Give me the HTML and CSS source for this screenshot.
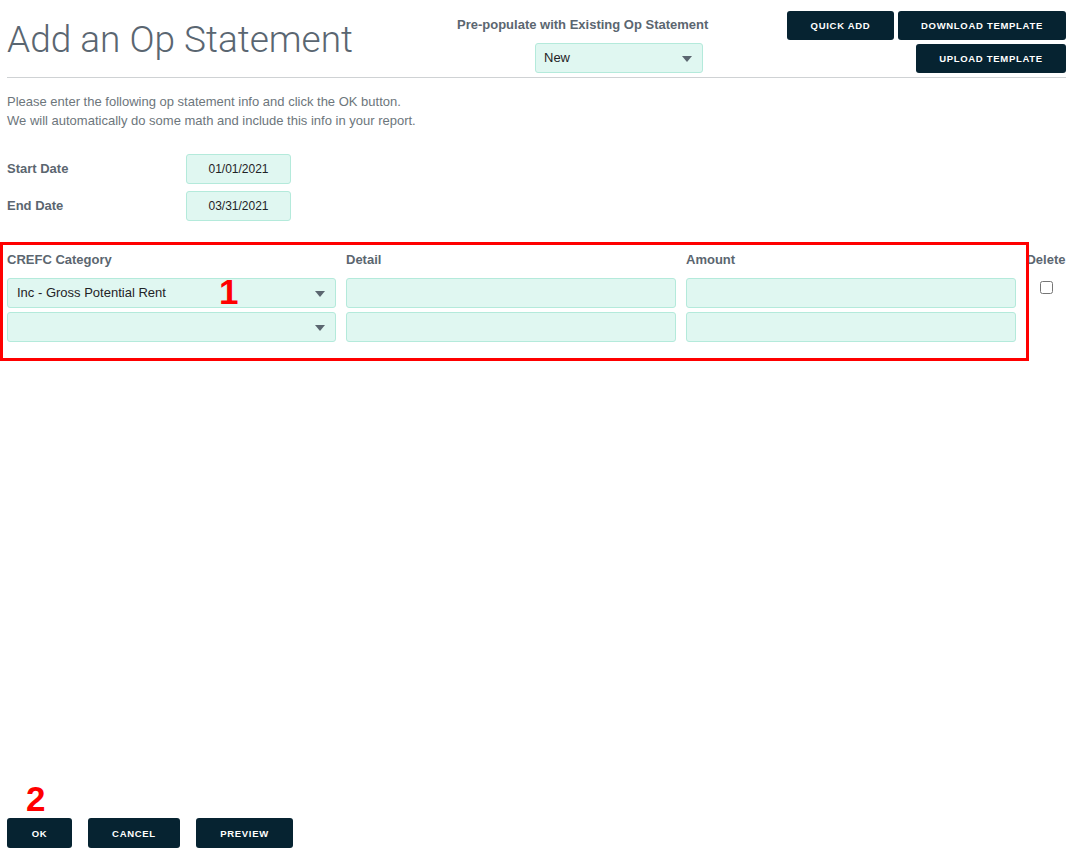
FILE: index.html
```html
<html>

<head>
  <meta charset="utf-8" />
  <title>Add an Op Statement</title>
  <link rel="stylesheet" href="styles.css">
</head>

<body>
  <div class="page">
    <div class="header">
      <h1 class="title">Add an Op Statement</h1>

      <div class="prepop">
        <div class="prepop-label">Pre-populate with Existing Op Statement</div>
        <div class="select prepop-select">New</div>
      </div>

      <div class="header-buttons">
        <div class="btn-row">
          <button class="btn btn-quick">QUICK ADD</button>
          <button class="btn btn-download">DOWNLOAD TEMPLATE</button>
        </div>
        <div class="btn-row">
          <button class="btn btn-upload">UPLOAD TEMPLATE</button>
        </div>
      </div>
    </div>

    <p class="intro">
      Please enter the following op statement info and click the OK button.<br>
      We will automatically do some math and include this info in your report.
    </p>

    <div class="dates">
      <div class="date-row">
        <div class="date-label">Start Date</div>
        <div class="field date-field">01/01/2021</div>
      </div>
      <div class="date-row">
        <div class="date-label">End Date</div>
        <div class="field date-field">03/31/2021</div>
      </div>
    </div>

    <div class="lines">
      <div class="col-head">CREFC Category</div>
      <div class="col-head">Detail</div>
      <div class="col-head">Amount</div>
      <div class="col-head col-delete">Delete</div>

      <div class="select line-select">Inc - Gross Potential Rent</div>
      <div class="field"></div>
      <div class="field"></div>
      <div class="delete-cell"><input type="checkbox" /></div>

      <div class="select line-select"></div>
      <div class="field"></div>
      <div class="field"></div>
      <div class="delete-cell"></div>

      <div class="mark-box"></div>
      <div class="mark mark-1">1</div>
    </div>

    <div class="footer">
      <div class="mark mark-2">2</div>
      <button class="btn btn-ok">OK</button>
      <button class="btn btn-cancel">CANCEL</button>
      <button class="btn btn-preview">PREVIEW</button>
    </div>
  </div>
</body>

</html>
```

FILE: styles.css
```css
html,
body {
  margin: 0;
  padding: 0;
  background: #fff;
}

body {
  font-family: "Liberation Sans", Arial, sans-serif;
  font-size: 13px;
  color: #5b6670;
}

.page {
  min-height: 100vh;
  box-sizing: border-box;
  padding: 0 8px 0 7px;
  display: flex;
  flex-direction: column;
}

/* header */
.header {
  display: flex;
  align-items: flex-start;
  height: 77px;
  border-bottom: 1px solid #cfd2d4;
}

.title {
  flex: 1;
  margin: 0;
  padding-top: 19px;
  font-family: Roboto, "Liberation Sans", sans-serif;
  font-weight: 300;
  font-size: 37px;
  line-height: 42px;
  color: #5a6671;
}

.prepop {
  width: 252px;
  margin-right: 78px;
  padding-top: 17px;
}

.prepop-label {
  font-weight: bold;
  font-size: 13px;
  line-height: 16px;
  white-space: nowrap;
}

.prepop-select {
  margin-top: 10px;
  margin-left: 78px;
  width: 168px;
}

.header-buttons {
  width: 279px;
  padding-top: 11px;
}

.btn-row {
  display: flex;
  justify-content: flex-end;
  gap: 4px;
  margin-bottom: 4px;
}

.btn {
  height: 29px;
  border: none;
  border-radius: 3px;
  background: #062331;
  color: #fff;
  font-family: "Liberation Sans", Arial, sans-serif;
  font-weight: bold;
  font-size: 9.5px;
  letter-spacing: 0.7px;
  padding: 0;
  cursor: pointer;
}

.btn-quick {
  width: 107px;
}

.btn-download {
  width: 168px;
}

.btn-upload {
  width: 150px;
}

/* form fields */
.field,
.select {
  box-sizing: border-box;
  height: 30px;
  line-height: 28px;
  background: #e0f7f1;
  border: 1px solid #b4eadb;
  border-radius: 3px;
  color: #1f2326;
  font-size: 13px;
}

.select {
  position: relative;
  padding-left: 8px;
}

.select::after {
  content: "";
  position: absolute;
  right: 10px;
  top: 12px;
  border-left: 5px solid transparent;
  border-right: 5px solid transparent;
  border-top: 6px solid #5b6670;
}

.intro {
  margin: 14px 0 0;
  line-height: 19px;
  color: #6d767c;
}

.dates {
  margin-top: 24px;
}

.date-row {
  display: flex;
  align-items: center;
  margin-bottom: 7px;
}

.date-label {
  width: 179px;
  font-weight: bold;
  padding-bottom: 1px;
}

.date-field {
  width: 105px;
  text-align: center;
  font-size: 12px;
}

/* line items */
.lines {
  position: relative;
  margin-top: 23px;
  display: grid;
  grid-template-columns: 329px 330px 330px 40px;
  column-gap: 10px;
  row-gap: 4px;
}

.col-head {
  font-weight: bold;
  line-height: 18px;
  margin-bottom: 5px;
}

.col-delete {
  text-align: center;
}

.line-select {
  padding-left: 9px;
}

.delete-cell {
  text-align: center;
}

.delete-cell input {
  margin: 3px 0 0;
  width: 13px;
  height: 13px;
}

.mark-box {
  position: absolute;
  left: -7px;
  top: -9px;
  width: 1029px;
  height: 119px;
  box-sizing: border-box;
  border: 3px solid #ff0000;
  pointer-events: none;
}

.mark {
  position: absolute;
  color: #ff0000;
  font-weight: bold;
  font-size: 35px;
  line-height: 35px;
}

.mark-1 {
  left: 212px;
  top: 23px;
}

.mark-2 {
  left: 19px;
  top: -37px;
}

/* footer */
.footer {
  position: relative;
  margin-top: auto;
  display: flex;
  gap: 16px;
  padding-bottom: 5px;
}

.btn-ok {
  width: 65px;
  height: 30px;
}

.btn-cancel {
  width: 92px;
  height: 30px;
}

.btn-preview {
  width: 97px;
  height: 30px;
}
```
